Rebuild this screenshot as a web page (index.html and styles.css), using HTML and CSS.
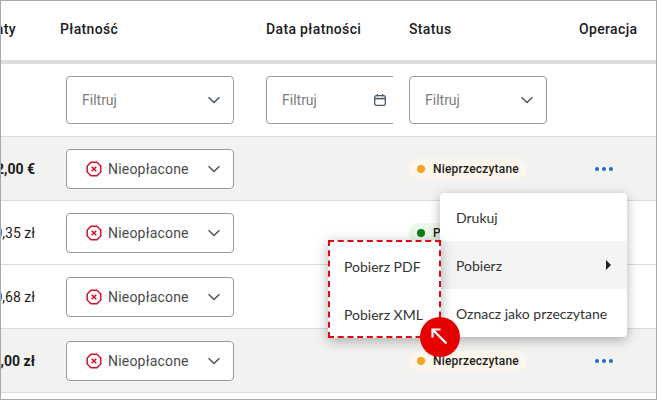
FILE: index.html
```html
<!DOCTYPE html>
<html lang="pl">
<head>
    <meta charset="UTF-8">
    <meta name="viewport" content="width=device-width, initial-scale=1.0">
    <title>Faktury</title>
    <link rel="stylesheet" href="styles.css">
</head>
<body>
    <svg class="icon-defs" width="0" height="0">
        <symbol id="chevron" viewBox="0 0 14 8">
            <path d="M1.5 1.2 7 6.6l5.5-5.4" fill="none" stroke="#46535f" stroke-width="1.4"/>
        </symbol>
        <symbol id="unpaid" viewBox="0 0 16 16">
            <path d="M5 1.2h6L14.8 5v6L11 14.8H5L1.2 11V5z" fill="#fff" stroke="#d8102c" stroke-width="1.5" stroke-linejoin="round"/>
            <path d="M5.7 5.7l4.6 4.6M10.3 5.7l-4.6 4.6" fill="none" stroke="#d8102c" stroke-width="1.6"/>
        </symbol>
    </svg>
    <div class="frame">
        <div class="row head">
            <div class="amount">Opłaty</div>
            <div class="cell">Płatność</div>
            <div class="cell">Data płatności</div>
            <div class="cell">Status</div>
            <div class="cell">Operacja</div>
        </div>
        <div class="row filters">
            <div class="amount"></div>
            <div class="cell">
                <div class="select tall pay-width"><span class="hint">Filtruj</span><svg class="chevron"><use href="#chevron"/></svg></div>
            </div>
            <div class="cell date-cell">
                <div class="select tall date-box">
                    <span class="hint date-hint">Filtruj</span>
                    <svg class="calendar" viewBox="0 0 12 12">
                        <rect x="0.7" y="1.7" width="10.6" height="9.6" rx="1.6" fill="none" stroke="#4a5b6b" stroke-width="1.3"/>
                        <path d="M0.7 4.6h10.6" stroke="#4a5b6b" stroke-width="1.6"/>
                        <path d="M3.4 0v2.6M8.6 0v2.6" stroke="#4a5b6b" stroke-width="1.2"/>
                    </svg>
                </div>
            </div>
            <div class="cell">
                <div class="select tall status-width"><span class="hint">Filtruj</span><svg class="chevron"><use href="#chevron"/></svg></div>
            </div>
            <div class="cell"></div>
        </div>
        <div class="row item shaded bold">
            <div class="amount">1 232,00 €</div>
            <div class="cell"><div class="select pay-width"><svg class="unpaid"><use href="#unpaid"/></svg><span class="value">Nieopłacone</span><svg class="chevron"><use href="#chevron"/></svg></div></div>
            <div class="cell"></div>
            <div class="cell"><span class="pill orange"><i class="dot"></i>Nieprzeczytane</span></div>
            <div class="cell"><div class="dots"><i></i><i></i><i></i></div></div>
        </div>
        <div class="row item">
            <div class="amount">1 120,35 zł</div>
            <div class="cell"><div class="select pay-width"><svg class="unpaid"><use href="#unpaid"/></svg><span class="value">Nieopłacone</span><svg class="chevron"><use href="#chevron"/></svg></div></div>
            <div class="cell"></div>
            <div class="cell"><span class="pill green"><i class="dot"></i>Przeczytane</span></div>
            <div class="cell"><div class="dots"><i></i><i></i><i></i></div></div>
        </div>
        <div class="row item">
            <div class="amount">1 540,68 zł</div>
            <div class="cell"><div class="select pay-width"><svg class="unpaid"><use href="#unpaid"/></svg><span class="value">Nieopłacone</span><svg class="chevron"><use href="#chevron"/></svg></div></div>
            <div class="cell"></div>
            <div class="cell"><span class="pill green"><i class="dot"></i>Przeczytane</span></div>
            <div class="cell"><div class="dots"><i></i><i></i><i></i></div></div>
        </div>
        <div class="row item shaded bold">
            <div class="amount">1 800,00 zł</div>
            <div class="cell"><div class="select pay-width"><svg class="unpaid"><use href="#unpaid"/></svg><span class="value">Nieopłacone</span><svg class="chevron"><use href="#chevron"/></svg></div></div>
            <div class="cell"></div>
            <div class="cell"><span class="pill orange"><i class="dot"></i>Nieprzeczytane</span></div>
            <div class="cell"><div class="dots"><i></i><i></i><i></i></div></div>
        </div>

        <div class="menu">
            <div class="menu-item">Drukuj</div>
            <div class="menu-item active">Pobierz<span class="caret"></span></div>
            <div class="menu-item">Oznacz jako przeczytane</div>
        </div>
        <div class="submenu">
            <div class="menu-item">Pobierz PDF</div>
            <div class="menu-item">Pobierz XML</div>
        </div>
        <div class="callout">
            <svg viewBox="0 0 40 40" width="40" height="40">
                <path d="M12.5 12.5 26.5 26.5M12.5 20.5v-8h8" fill="none" stroke="#fff" stroke-width="2.2"/>
            </svg>
        </div>
    </div>
</body>
</html>
```

FILE: styles.css
```css
* {
    box-sizing: border-box;
}
body {
    margin: 0;
    font-family: Roboto, Arial, sans-serif;
    color: #1c1c22;
}
.icon-defs {
    position: absolute;
}
.frame {
    position: relative;
    width: 657px;
    height: 400px;
    border: 1px solid #a9a9a9;
    overflow: hidden;
    background-color: #fff;
}
.row {
    display: grid;
    grid-template-columns: 59px 206px 143px 170px 1fr;
    align-items: center;
    border-bottom: 1px solid #dcdcdc;
}
.head {
    height: 63px;
    padding-bottom: 4px;
    border-bottom: 4px solid #dedede;
    font-size: 14px;
    font-weight: 500;
    letter-spacing: 0.35px;
}
.filters {
    height: 73px;
}
.item {
    height: 64px;
    font-size: 14px;
}
.shaded {
    background-color: #f2f2f0;
}
.bold .amount {
    font-weight: 700;
}
.amount {
    display: flex;
    justify-content: flex-end;
    overflow: hidden;
    white-space: nowrap;
    padding-right: 25px;
}
.head .amount {
    padding-right: 44px;
}
.select {
    display: flex;
    align-items: center;
    height: 40px;
    margin-left: 6px;
    padding-left: 19px;
    background-color: #fff;
    border: 1px solid #9a9a9a;
    border-radius: 4px;
    font-size: 14px;
}
.tall {
    height: 48px;
    padding-left: 15px;
}
.pay-width {
    width: 168px;
}
.status-width {
    width: 138px;
    margin-left: 0;
}
.date-cell {
    width: 127px;
    overflow: hidden;
}
.date-box {
    width: 150px;
    margin-left: 0;
}
.date-hint {
    width: 34px;
    overflow: hidden;
}
.calendar {
    width: 12px;
    height: 12px;
    margin-left: 58px;
}
.hint {
    color: #7c7c7c;
    white-space: nowrap;
}
.value {
    margin-left: 6px;
    color: #4b4b4b;
    letter-spacing: 0.2px;
}
.unpaid {
    width: 16px;
    height: 16px;
    flex-shrink: 0;
}
.chevron {
    width: 14px;
    height: 8px;
    margin-left: auto;
    margin-right: 12px;
}
.pill {
    display: inline-flex;
    align-items: center;
    height: 20px;
    padding: 0 8px;
    border-radius: 10px;
    font-size: 12px;
    font-weight: 500;
    letter-spacing: 0.2px;
}
.dot {
    width: 8px;
    height: 8px;
    margin-right: 8px;
    border-radius: 50%;
}
.orange {
    background-color: #fdf6ec;
}
.orange .dot {
    background-color: #f9a51f;
}
.green {
    background-color: #eef7ec;
}
.green .dot {
    background-color: #0b7d16;
}
.dots {
    display: flex;
    gap: 2px;
    margin-left: 16px;
}
.dots i {
    width: 4px;
    height: 4px;
    margin-right: 1px;
    border-radius: 50%;
    background-color: #1a6ec4;
}
.menu,
.submenu {
    position: absolute;
    background-color: #fff;
    font-family: Lato, Arial, sans-serif;
    font-size: 14px;
    color: #333;
    box-shadow: 0 3px 12px rgba(0, 0, 0, 0.3);
}
.menu {
    left: 439px;
    top: 192px;
    width: 187px;
    border-radius: 4px;
}
.submenu {
    left: 327px;
    top: 239px;
    width: 113px;
    height: 98px;
    border: 2px dashed #e30613;
}
.menu-item {
    display: flex;
    align-items: center;
    justify-content: space-between;
    height: 48px;
    padding: 0 16px;
    white-space: nowrap;
}
.submenu .menu-item {
    padding: 0 14px;
}
.active {
    background-color: #f4f4f4;
}
.caret {
    width: 0;
    height: 0;
    border-left: 5px solid #222;
    border-top: 5px solid transparent;
    border-bottom: 5px solid transparent;
}
.callout {
    position: absolute;
    left: 419px;
    top: 316px;
    width: 40px;
    height: 40px;
    border-radius: 50%;
    background-color: #e60000;
}
```
